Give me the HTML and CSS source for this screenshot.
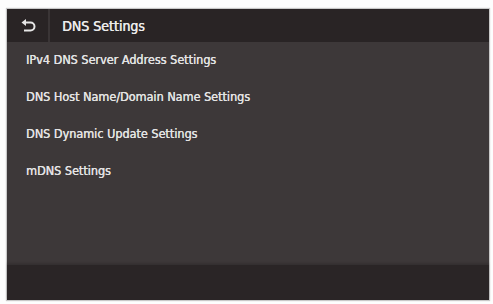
FILE: index.html
```html
<!DOCTYPE html>
<html>
<head>
<meta charset="utf-8">
<link rel="stylesheet" href="styles.css">
</head>
<body>
<div class="screen">
  <div class="header">
    <div class="back">
      <svg width="18" height="16" viewBox="0 0 18 16">
        <path d="M4 4.5 H10.5 A4 4 0 0 1 10.5 12.5 H4" fill="none" stroke="#e6e6e6" stroke-width="2"/>
        <path d="M1.5 4.5 L6 1 L6 8 Z" fill="#e6e6e6"/>
      </svg>
    </div>
    <div class="title">DNS Settings</div>
  </div>
  <div class="list">
    <div class="item">IPv4 DNS Server Address Settings</div>
    <div class="item">DNS Host Name/Domain Name Settings</div>
    <div class="item">DNS Dynamic Update Settings</div>
    <div class="item">mDNS Settings</div>
  </div>
  <div class="footer"></div>
</div>
</body>
</html>
```
FILE: styles.css
```css
html, body {
  margin: 0;
  padding: 0;
  background: #fdfdfd;
}
body {
  padding: 9px 4px 4px 7px;
  font-family: "DejaVu Sans Condensed", "DejaVu Sans", sans-serif;
  font-stretch: condensed;
}
.screen {
  width: 482px;
  height: 291px;
  display: flex;
  flex-direction: column;
  background: #3d3839;
  box-shadow: 0 0 1px 1px #c8c8c8;
}
.header {
  height: 33px;
  background: #292425;
  display: flex;
  align-items: center;
  flex-shrink: 0;
}
.back {
  width: 43px;
  height: 33px;
  display: flex;
  align-items: center;
  justify-content: center;
  border-right: 2px solid #3a3536;
  box-sizing: border-box;
  padding-left: 2px;
}
.back svg {
  display: block;
}
.title {
  margin-left: 12px;
  color: #ececec;
  font-size: 14px;
  text-shadow: 0.4px 0 0 #ececec;
}
.list {
  flex: 1;
  padding-top: 8px;
  display: flex;
  flex-direction: column;
}
.item {
  height: 37px;
  line-height: 20px;
  padding-left: 19px;
  color: #e4e4e4;
  font-size: 12.5px;
  text-shadow: 0.3px 0 0 #e4e4e4;
}
.footer {
  height: 35px;
  background: #2a2526;
  flex-shrink: 0;
  box-shadow: 0 -2px 2px rgba(0,0,0,0.15);
}
```
